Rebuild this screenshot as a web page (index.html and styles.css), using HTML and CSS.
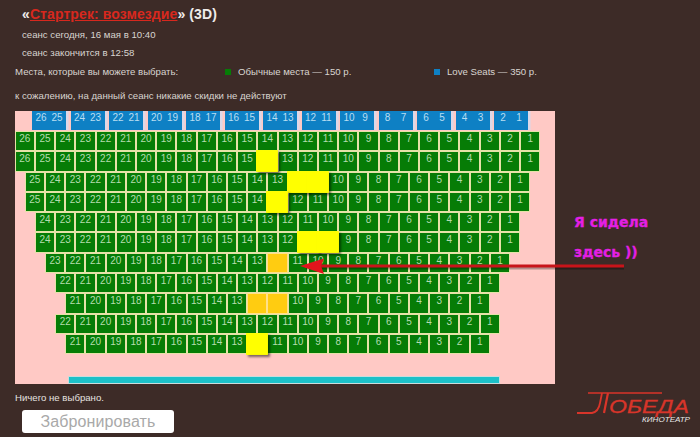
FILE: index.html
```html
<!DOCTYPE html>
<html lang="ru">
<head>
    <meta charset="UTF-8">
    <title>Стартрек: возмездие</title>
    <link rel="stylesheet" href="styles.css">
</head>
<body>
    <h1 class="film-title">«<a href="#" class="film-link">Стартрек: возмездие</a>» (3D)</h1>
    <div class="session-line">сеанс сегодня, 16 мая в 10:40</div>
    <div class="session-line">сеанс закончится в 12:58</div>
    <div class="legend">
        <span class="legend-title">Места, которые вы можете выбрать:</span>
        <span class="legend-item legend-regular"><i class="swatch swatch-green"></i>Обычные места — 150 р.</span>
        <span class="legend-item"><i class="swatch swatch-blue"></i>Love Seats — 350 р.</span>
    </div>
    <div class="discount-note">к сожалению, на данный сеанс никакие скидки не действуют</div>

    <div class="hall">
        <div class="love-row" id="loveRow"></div>
        <div class="rows" id="rows"></div>
        <div class="screen"></div>
    </div>

    <div class="footer">
        <div>
            <div class="status">Ничего не выбрано.</div>
            <button class="book-button">Забронировать</button>
        </div>
        <svg class="logo" width="118" height="42" viewBox="0 0 118 42">
            <path d="M13 4H87" stroke="#d8352a" stroke-width="1.6" fill="none"/>
            <path d="M2 24H17C22 23 24 20 25 14L27 4" stroke="#d8352a" stroke-width="1.8" fill="none"/>
            <path d="M33 4L29 24" stroke="#d8352a" stroke-width="2.2" fill="none"/>
            <text x="34" y="24" textLength="80" lengthAdjust="spacingAndGlyphs" class="logo-name">ОБЕДА</text>
            <text x="67" y="33" textLength="48" lengthAdjust="spacingAndGlyphs" class="logo-sub">КИНОТЕАТР</text>
        </svg>
    </div>

    <svg class="arrow" width="340" height="20" viewBox="0 0 340 20">
        <path d="M6 11H324" stroke="#000" stroke-opacity="0.3" stroke-width="3" fill="none"/>
        <path d="M5 9H324" stroke="#c8141a" stroke-width="3" fill="none"/>
        <path d="M0 9L24 1.5L21 9L24 17Z" fill="#e0141c"/>
    </svg>
    <div class="note">Я сидела<br>здесь ))</div>

    <script src="script.js"></script>
</body>
</html>
```

FILE: styles.css
```css
body {
    margin: 0;
    padding: 0 0 0 15px;
    height: 437px;
    overflow: hidden;
    position: relative;
    background-color: #3d2b27;
    font-family: "Liberation Sans", Arial, sans-serif;
    font-size: 9.65px;
    color: #d9d5d1;
}
.film-title {
    margin: 0;
    padding: 6px 0 0 7px;
    font-size: 14px;
    line-height: 16px;
    letter-spacing: 0.1px;
    color: #efecea;
}
.film-link {
    color: #d8281e;
    text-decoration: underline;
}
.session-line {
    padding-left: 7px;
    margin-top: 7px;
    line-height: 12px;
}
.session-line + .session-line {
    margin-top: 6px;
}
.legend {
    display: flex;
    margin-top: 7px;
    line-height: 12px;
}
.legend-title {
    width: 210px;
}
.legend-item {
    display: flex;
    align-items: center;
}
.legend-regular {
    width: 209px;
}
.swatch {
    width: 6px;
    height: 6px;
    margin-right: 7px;
}
.swatch-green {
    background-color: #067c06;
}
.swatch-blue {
    background-color: #0e80c4;
}
.discount-note {
    margin-top: 12px;
    line-height: 12px;
}
.hall {
    width: 540px;
    height: 273px;
    margin-top: 9px;
    background-color: #ffc9c5;
    overflow: hidden;
}
.love-row {
    display: flex;
    gap: 4.5px;
    height: 19px;
    padding-left: 17px;
    margin-bottom: 1px;
}
.love-seat {
    display: grid;
    grid-template-columns: 1fr 1fr;
    width: 34px;
    height: 19px;
    padding: 0 1px;
    box-sizing: border-box;
    background-color: #0e80c4;
    box-shadow: 2.5px 0 0 #dcd8e8;
    color: #b9def2;
    font-size: 10px;
    text-align: center;
    line-height: 14px;
}
.rows {
    width: 526px;
    margin-left: -0.5px;
}
.seat-row {
    display: flex;
    justify-content: center;
    height: 20.3px;
}
.seat {
    flex: 0 0 20.23px;
    box-sizing: border-box;
    height: 20.3px;
    border: 1px solid #e6e2a8;
    background-color: #067c06;
    color: #b5dcae;
    font-size: 10px;
    text-align: center;
    line-height: 13px;
}
.seat-taken {
    background-color: #ffcc11;
    border-color: #ffe08a;
    color: transparent;
}
.seat-selected {
    position: relative;
    z-index: 1;
    background-color: #ffff00;
    border-color: #ffff00;
    color: transparent;
    box-shadow: 2px 2px 2px rgba(0, 0, 0, 0.5);
    transform: scale(1.08);
}
.screen {
    width: 430px;
    height: 6px;
    margin: 21.5px 0 0 53px;
    border: 1px solid #c9dcdc;
    background-color: #1cc0c8;
}
.footer {
    display: flex;
    justify-content: space-between;
    width: 678px;
}
.status {
    margin-top: 8px;
    line-height: 12px;
    color: #e6e3e0;
}
.book-button {
    display: block;
    width: 152px;
    height: 23px;
    margin: 6px 0 0 7px;
    padding: 0;
    border: none;
    border-radius: 3px;
    background-color: #fff;
    font-family: "Liberation Sans", Arial, sans-serif;
    font-size: 16px;
    letter-spacing: 0.1px;
    color: #a9a9a9;
}
.logo {
    margin-top: 5px;
}
.logo-name {
    font-family: "Liberation Sans", Arial, sans-serif;
    font-style: italic;
    font-size: 18px;
    fill: #d8352a;
    stroke: #d8352a;
    stroke-width: 0.3px;
}
.logo-sub {
    font-family: "Liberation Sans", Arial, sans-serif;
    font-style: italic;
    font-size: 7px;
    fill: #e8e8e8;
}
.arrow {
    position: absolute;
    left: 300px;
    top: 257px;
}
.note {
    position: absolute;
    left: 574px;
    top: 207px;
    font-family: "DejaVu Sans", sans-serif;
    font-size: 14px;
    font-weight: bold;
    line-height: 30px;
    color: #e41fe4;
    -webkit-text-stroke: 0.3px #e41fe4;
}
```

FILE: script.js
```js
// seat = number; t: orange seats, s: yellow selected seats
const hallRows = [
    { from: 26 },
    { from: 26, s: [14] },
    { from: 25, s: [12, 11] },
    { from: 25, s: [13] },
    { from: 24 },
    { from: 24, s: [11, 10] },
    { from: 23, t: [12] },
    { from: 22 },
    { from: 21, t: [12, 11] },
    { from: 22 },
    { from: 21, s: [12] }
];

const loveRow = document.getElementById('loveRow');
for (let n = 26; n > 0; n -= 2) {
    const seat = document.createElement('div');
    seat.className = 'love-seat';
    seat.innerHTML = '<span>' + n + '</span><span>' + (n - 1) + '</span>';
    loveRow.appendChild(seat);
}

const rows = document.getElementById('rows');
hallRows.forEach(data => {
    const row = document.createElement('div');
    row.className = 'seat-row';
    for (let n = data.from; n > 0; n--) {
        const seat = document.createElement('div');
        seat.className = 'seat';
        if (data.t && data.t.includes(n)) seat.className += ' seat-taken';
        if (data.s && data.s.includes(n)) seat.className += ' seat-selected';
        seat.textContent = n;
        row.appendChild(seat);
    }
    rows.appendChild(row);
});
```
